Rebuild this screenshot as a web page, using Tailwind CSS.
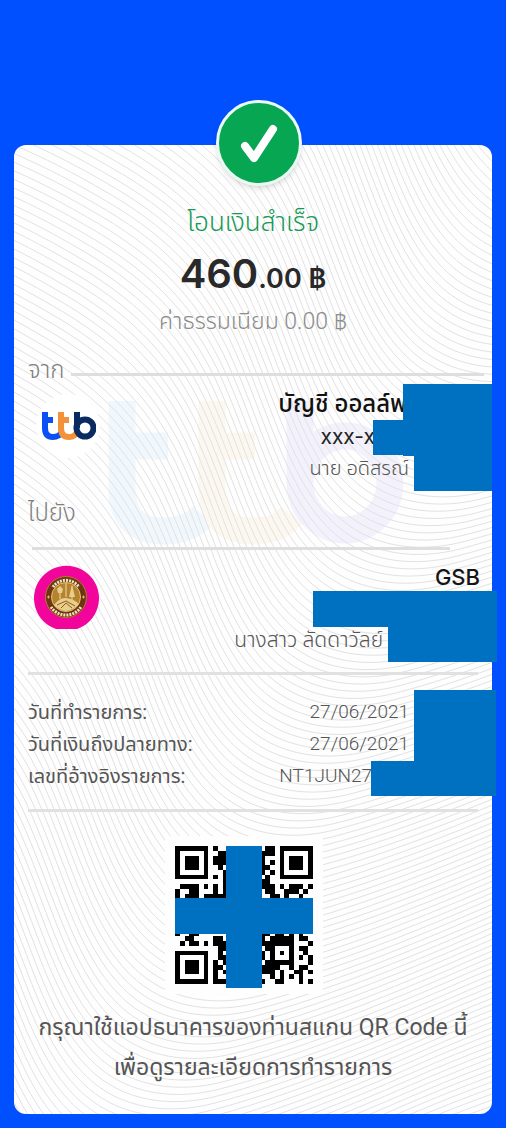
<!DOCTYPE html>
<html lang="th">
<head>
<meta charset="utf-8">
<meta name="viewport" content="width=device-width, initial-scale=1">
<title>โอนเงินสำเร็จ</title>
<script src="https://cdn.jsdelivr.net/npm/@tailwindcss/browser@4"></script>
</head>
<body class="min-h-screen bg-[#0050ff] px-3.5 pt-[145px] pb-3.5 font-['Roboto','Noto_Sans_Thai',sans-serif] text-[#555]">
<main class="relative rounded-xl bg-[#fefefe] px-3.5 pt-[61px] pb-[26px]">

  <!-- Guilloche lines and watermark -->
  <svg class="absolute inset-0 h-full w-full rounded-xl" viewBox="14 145 478 969" preserveAspectRatio="xMidYMid slice" aria-hidden="true">
    <g fill="none" stroke-width="27">
      <path stroke="#f0f7fd" d="M122 401V488Q122 531 163 531Q190 531 203 515M122 446H168"/>
      <path stroke="#fdf8ef" d="M212 401V488Q212 531 253 531Q280 531 292 515M212 446H255"/>
      <path stroke="#f3f2fc" d="M300 401V483M300 483a45 47 0 1 0 90 0a45 47 0 1 0-90 0"/>
    </g>
    <defs><path id="wave" d="M-330 275C-160 295 -60 340 14 383C80 420 120 460 150 520C185 595 200 670 245 715C280 750 330 755 375 743C440 726 520 695 600 660C700 616 800 585 900 555"/></defs>
    <g id="waves" fill="none" stroke="#e2e2e2" stroke-width="1"></g>
  </svg>

  <!-- Success badge -->
  <div class="absolute -top-[45px] left-1/2 size-[86px] -translate-x-[37px] rounded-full border-[3px] border-[#e9faf3] bg-[#06a652] shadow-md">
    <svg viewBox="0 0 80 80" class="size-full" aria-hidden="true"><path d="M26 43L35 55L54 26" fill="none" stroke="#fff" stroke-width="8" stroke-linecap="round" stroke-linejoin="round"/></svg>
  </div>

  <div class="relative">
    <section class="text-center">
      <h1 class="text-[26px] leading-8 font-light text-[#159957]">โอนเงินสำเร็จ</h1>
      <p class="mt-3 font-['Inter',sans-serif] text-[40px] leading-[48px] font-semibold text-[#292929]">460<span class="text-[27px]">.00 ฿</span></p>
      <p class="mt-[3px] text-[23px] leading-8 font-light text-[#8c8c8c]">ค่าธรรมเนียม 0.00 ฿</p>
    </section>

    <section class="relative mt-4">
      <div class="flex items-center gap-1.5">
        <h2 class="text-[24px] leading-8 font-light text-[#808080]">จาก</h2>
        <div class="-mr-1.5 mt-2 h-[3px] grow bg-[#dedede]"></div>
      </div>
      <div class="mt-0.5 flex items-start justify-between">
        <div class="ml-2 mt-1.5 flex size-[64px] items-center justify-center rounded-full bg-white">
          <svg viewBox="0 0 55 28" class="h-7 w-[55px]" role="img" aria-label="ttb" fill="none" stroke-width="6">
            <path stroke="#0b50f5" d="M4 0V16Q4 25 12 25Q18 25 21 20M4 8H12"/>
            <path stroke="#f39239" d="M20 0V16Q20 25 28 25Q34 25 36 20M20 8H28"/>
            <path stroke="#0a2a62" d="M36 0V16"/><circle cx="44" cy="16" r="8.5" stroke="#0a2a62"/>
          </svg>
        </div>
        <div class="flex flex-col items-end pr-[69px]">
          <p class="pr-0.5 text-[24px] leading-8 font-medium text-[#111]">บัญชี ออลล์พ</p>
          <p class="pr-[34px] font-['Inter',sans-serif] text-[21px] leading-[34px] text-[#222]">xxx-x</p>
          <p class="text-[20px] leading-7 font-light">นาย อดิสรณ์</p>
        </div>
      </div>
      <div class="absolute top-[30px] -right-3.5 h-[72px] w-[89px] bg-[#0070c0]"></div>
      <div class="absolute top-[66px] -right-3.5 h-[35px] w-[119px] bg-[#0070c0]"></div>
      <div class="absolute top-[101px] -right-3.5 h-9 w-[78px] bg-[#0070c0]"></div>
    </section>

    <section class="relative mt-[15px]">
      <h2 class="text-[24px] leading-8 font-light text-[#808080]">ไปยัง</h2>
      <div class="mt-[18px] mr-7 ml-1 h-[3px] bg-[#dedede]"></div>
      <div class="mt-[11px] flex items-start justify-between">
        <svg viewBox="0 0 66 66" class="mt-1 ml-1.5 size-[66px]" role="img" aria-label="ธนาคารออมสิน">
          <path fill="#f2059b" d="M22 64A32.500 32.500 0 1 1 43 64Z"/>
          <circle cx="32" cy="32" r="20.500" fill="#6d3513" stroke="#b27a2c"/>
          <path d="M19 23A16 16 0 0 1 45 23" transform="translate(0 -1)" fill="none" stroke="#f0e2bb" stroke-width="3" stroke-dasharray="2 1"/>
          <path d="M17 42A18 18 0 0 0 47 42" fill="none" stroke="#f0e2bb" stroke-width="3" stroke-dasharray="2 1"/>
          <circle cx="32" cy="32" r="14.500" fill="#b5832d" stroke="#e2c37c"/>
          <path d="M14.500 30.500V33.500M13 32H16M49.500 30.500V33.500M48 32H51" stroke="#ddb965"/>
          <path d="M32 18V32M26 25V34M38 21V35" stroke="#f0dda6" fill="none"/>
          <path d="M38 20L35 32H41ZM23 24L26 21L29 24L28 28H24ZM20 40Q26 32 32 33Q40 34 45 39Q39 45 32 46Q25 45 20 40" fill="#e8ce8d"/>
          <path d="M23 40L32 36L41 41M27 43L32 38L38 43" stroke="#8e5b1d" fill="none"/>
        </svg>
        <div class="flex flex-col items-end">
          <p class="-mr-0.5 font-['Inter',sans-serif] text-[22px] leading-8 font-medium text-[#151515]">GSB</p>
          <p class="mt-[31px] pr-[84px] text-[21px] leading-8 font-light">นางสาว ลัดดาวัลย์ เ</p>
        </div>
      </div>
      <div class="absolute top-[94px] -right-[19px] h-9 w-[184px] bg-[#0070c0]"></div>
      <div class="absolute top-[130px] -right-[19px] h-[35px] w-[109px] bg-[#0070c0]"></div>
    </section>

    <div class="mt-4 h-[3px] bg-[#e1e1e1]"></div>

    <section class="relative mt-[21px] text-[20px] leading-8">
      <dl>
        <div class="flex justify-between"><dt>วันที่ทำรายการ:</dt><dd class="pr-[69px] text-[19px] font-light">27/06/2021</dd></div>
        <div class="flex justify-between"><dt>วันที่เงินถึงปลายทาง:</dt><dd class="pr-[69px] text-[19px] font-light">27/06/2021</dd></div>
        <div class="flex justify-between"><dt>เลขที่อ้างอิงรายการ:</dt><dd class="pr-[106px] text-[19px] font-light">NT1JUN27</dd></div>
      </dl>
      <div class="absolute -top-1.5 -right-[18px] h-[72px] w-[82px] bg-[#0070c0]"></div>
      <div class="absolute top-[65px] -right-[18px] h-[35px] w-[125px] bg-[#0070c0]"></div>
    </section>

    <div class="mt-[17px] h-[3px] bg-[#e1e1e1]"></div>

    <section class="mt-6 flex flex-col items-center">
      <div class="relative mr-[18px] bg-[#fefefe] p-2.5">
        <svg id="qr" class="size-[138px]" viewBox="0 0 29 29" shape-rendering="crispEdges" role="img" aria-label="QR Code"></svg>
        <div class="absolute top-2.5 left-[61px] h-[142px] w-9 bg-[#0070c0]"></div>
        <div class="absolute top-[62px] left-2.5 h-9 w-[138px] bg-[#0070c0]"></div>
      </div>
      <p class="mt-3.5 text-center text-[23px] leading-10">กรุณาใช้แอปธนาคารของท่านสแกน QR Code นี้<br>เพื่อดูรายละเอียดการทำรายการ</p>
    </section>
  </div>
</main>
<script>
  const waves = [];
  for (let k = -110; k <= 110; k++) waves.push(`<use href="#wave" transform="translate(${-3.2 * k} ${7.2 * k})"/>`);
  document.getElementById('waves').innerHTML = waves.join('');

  const rows = [
    '#######.#..........##.#######',
    '#.....#..##.......###.#.....#',
    '#.###.#.###.......#...#.###.#',
    '#.###.#.###.......#.#.#.###.#',
    '#.###.#..#........##..#.###.#',
    '#.....#...#.......#.#.#.....#',
    '#######.#.#........#..#######',
    '..........#.......##.........',
    '.####.#.#.#.......###.#.###.#',
    '#..##...#.#........##..###.#.',
    '#.###.#####.........##.#..#..',
    '.............................',
    '.............................',
    '.............................',
    '.............................',
    '.............................',
    '.............................',
    '.............................',
    '#..##.............##.##.#.#..',
    '..##....##........#.#####.##.',
    '.#.##.#.###.......#######...#',
    '.........##........##...#.##.',
    '#######..#........#.#.#.#..#.',
    '#.....#..##.......#.#...#.#.#',
    '#.###.#.#.#........######...#',
    '#.###.#.##........####..#.##.',
    '#.###.#.#.#.......###.#..##.#',
    '#.....#.#...........#.#.#.#..',
    '#######.###.......#..##...#.#'
  ];
  let d = '';
  rows.forEach((row, y) => [...row].forEach((c, x) => { if (c === '#') d += `M${x} ${y}h1v1h-1z`; }));
  document.getElementById('qr').innerHTML = `<path d="${d}"/>`;
</script>
</body>
</html>
